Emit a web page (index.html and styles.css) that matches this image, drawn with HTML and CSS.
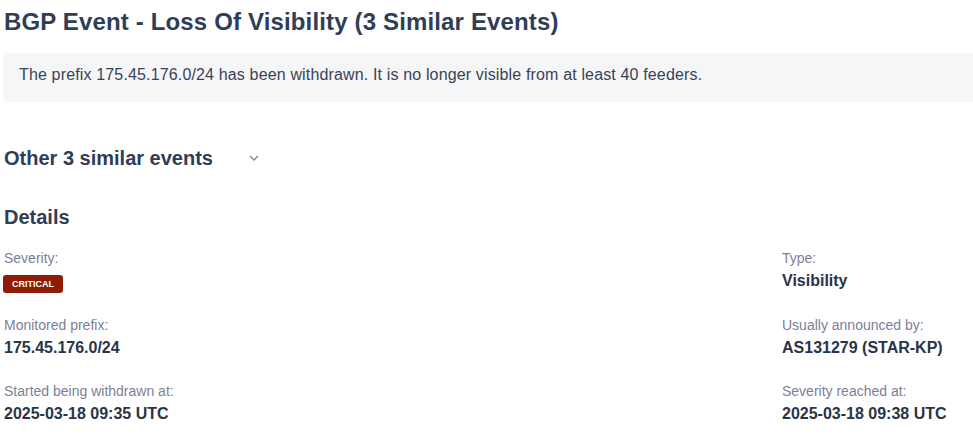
FILE: index.html
```html
<!DOCTYPE html>
<html>
<head>
<meta charset="utf-8">
<link rel="stylesheet" href="styles.css">
</head>
<body>
<div class="page">
  <h1 class="title">BGP Event - Loss Of Visibility (3 Similar Events)</h1>
  <div class="summary">The prefix 175.45.176.0/24 has been withdrawn. It is no longer visible from at least 40 feeders.</div>
  <div class="similar">
    <h2 class="section">Other 3 similar events</h2>
    <svg class="chev" width="12" height="8" viewBox="0 0 12 8"><path d="M2 2 L6 6 L10 2" fill="none" stroke="#8a8a8a" stroke-width="1.5"/></svg>
  </div>
  <h2 class="section details-h">Details</h2>
  <div class="grid">
    <div class="field">
      <div class="label">Severity:</div>
      <div><span class="badge">CRITICAL</span></div>
    </div>
    <div class="field">
      <div class="label">Type:</div>
      <div class="value">Visibility</div>
    </div>
    <div class="field">
      <div class="label">Monitored prefix:</div>
      <div class="value">175.45.176.0/24</div>
    </div>
    <div class="field">
      <div class="label">Usually announced by:</div>
      <div class="value">AS131279 (STAR-KP)</div>
    </div>
    <div class="field">
      <div class="label">Started being withdrawn at:</div>
      <div class="value">2025-03-18 09:35 UTC</div>
    </div>
    <div class="field">
      <div class="label">Severity reached at:</div>
      <div class="value">2025-03-18 09:38 UTC</div>
    </div>
  </div>
</div>
</body>
</html>
```
FILE: styles.css
```css
html, body { margin: 0; padding: 0; overflow: hidden; background: #fff; }
body { font-family: "Liberation Sans", Arial, sans-serif; color: #2f3d57; }
.page { width: 1000px; padding-left: 4px; }
.title { margin: 0; padding-top: 8px; font-size: 24px; line-height: 28px; font-weight: bold; color: #2f3d57; letter-spacing: 0.15px; }
.summary { margin: 17px 0 0 -1px; background: #f5f6f8; border-radius: 6px; padding: 11px 16px 17px 16px; font-size: 16px; line-height: 21px; color: #3a4356; letter-spacing: 0.15px; }
.similar { display: flex; align-items: center; margin-top: 44px; }
.section { margin: 0; font-size: 20px; line-height: 24px; font-weight: bold; color: #2f3d57; }
.chev { margin-left: 35px; }
.details-h { margin-top: 35px; }
.grid { display: grid; grid-template-columns: 778px 1fr; row-gap: 24px; margin-top: 21px; }
.label { font-size: 14px; line-height: 17px; color: #7c7f98; }
.value { margin-top: 3px; font-size: 16px; line-height: 22px; font-weight: bold; color: #2a3448; }
.badge { display: inline-block; margin: 8px 0 0 -1px; background: #8f1c04; color: #fff; font-size: 9px; font-weight: bold; line-height: 18px; padding: 0 9px; border-radius: 3px; vertical-align: top; }
```
